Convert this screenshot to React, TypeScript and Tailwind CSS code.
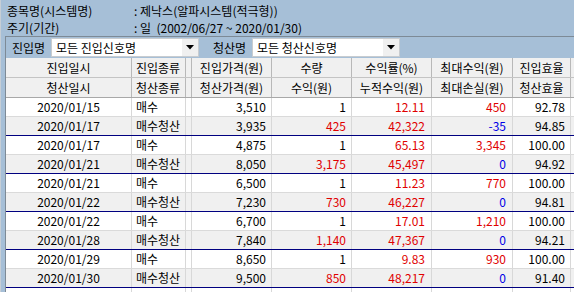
import React from 'react'

type Cell = { text: string; color?: 'red' | 'blue' }
type Row = Cell[]

const widths = ['w-[126px]', 'w-[54px]', 'w-[6px]', 'w-[80px]', 'w-[80px]', 'w-[80px]', 'w-[81px]', 'w-[58px]', 'w-[20px]']

// alignment per column for data rows
const align = [
  'justify-center',
  'justify-start pl-[4px]',
  'justify-start',
  'justify-end pr-[5px]',
  'justify-end pr-[5px]',
  'justify-end pr-[6px]',
  'justify-end pr-[6px]',
  'justify-end pr-[5px]',
  'justify-end',
]

const head1 = ['진입일시', '진입종류', '', '진입가격(원)', '수량', '수익률(%)', '최대수익(원)', '진입효율', '']
const head2 = ['청산일시', '청산종류', '', '청산가격(원)', '수익(원)', '누적수익(원)', '최대손실(원)', '청산효율', '']

const r = (t: string): Cell => ({ text: t, color: 'red' })
const b = (t: string): Cell => ({ text: t, color: 'blue' })
const k = (t: string): Cell => ({ text: t })

const rows: Row[] = [
  [k('2020/01/15'), k('매수'), k(''), k('3,510'), k('1'), r('12.11'), r('450'), k('92.78'), k('')],
  [k('2020/01/17'), k('매수청산'), k(''), k('3,935'), r('425'), r('42,322'), b('-35'), k('94.85'), k('')],
  [k('2020/01/17'), k('매수'), k(''), k('4,875'), k('1'), r('65.13'), r('3,345'), k('100.00'), k('')],
  [k('2020/01/21'), k('매수청산'), k(''), k('8,050'), r('3,175'), r('45,497'), b('0'), k('94.92'), k('')],
  [k('2020/01/21'), k('매수'), k(''), k('6,500'), k('1'), r('11.23'), r('770'), k('100.00'), k('')],
  [k('2020/01/22'), k('매수청산'), k(''), k('7,230'), r('730'), r('46,227'), b('0'), k('94.81'), k('')],
  [k('2020/01/22'), k('매수'), k(''), k('6,700'), k('1'), r('17.01'), r('1,210'), k('100.00'), k('')],
  [k('2020/01/28'), k('매수청산'), k(''), k('7,840'), r('1,140'), r('47,367'), b('0'), k('94.21'), k('')],
  [k('2020/01/29'), k('매수'), k(''), k('8,650'), k('1'), r('9.83'), r('930'), k('100.00'), k('')],
  [k('2020/01/30'), k('매수청산'), k(''), k('9,500'), r('850'), r('48,217'), b('0'), k('91.40'), k('')],
]

function Arrow() {
  return (
    <svg width="8" height="5" viewBox="0 0 8 5" aria-hidden="true">
      <polygon points="0,0 8,0 4,4.5" fill="#000" />
    </svg>
  )
}

function Combo({ label, value }: { label: string; value: string }) {
  return (
    <div className="flex h-full">
      <div className="flex w-[45px] items-center justify-center">{label}</div>
      <div className="flex w-[148px] items-center border border-[#c8ccd0] bg-white">
        <span className="flex-1 pl-[4px]">{value}</span>
        <span className="flex h-full w-[16px] items-center justify-center bg-[#f0f0f0]">
          <Arrow />
        </span>
      </div>
    </div>
  )
}

function HeaderRow({ cells, last }: { cells: string[]; last?: boolean }) {
  return (
    <div className={`flex h-[20px] border-b ${last ? 'border-[#a8a8a8]' : 'border-[#c4c4c4]'}`}>
      {cells.map((t, i) => (
        <div
          key={i}
          className={`${widths[i]} flex shrink-0 items-center overflow-hidden whitespace-nowrap border-r border-[#b8b8b8] bg-[#f0f0f0] ${
            i === 1 ? 'justify-start pl-[4px]' : 'justify-center'
          }`}
        >
          {t}
        </div>
      ))}
    </div>
  )
}

export default function App() {
  return (
    <div
      className="h-[292px] w-[574px] overflow-hidden border-l border-[#c6ced6] bg-[#a6bfd7] text-[12px] leading-none text-black"
      style={{ fontFamily: '"Noto Sans CJK KR", "Liberation Sans", sans-serif' }}
    >
      {/* info lines */}
      <div className="flex h-[36px] flex-col pl-[6px] pt-[2px]">
        <div className="flex h-[17px] items-center">
          <span className="w-[127px]">종목명(시스템명)</span>
          <span className="whitespace-pre">: 제낙스(알파시스템(적극형))</span>
        </div>
        <div className="flex h-[17px] items-center">
          <span className="w-[127px]">주기(기간)</span>
          <span className="whitespace-pre">: 일  (2002/06/27 ~ 2020/01/30)</span>
        </div>
      </div>

      {/* panel */}
      <div className="ml-[4px] border-l border-t border-[#7d8a96]">
        <div className="flex h-[21px] gap-[8px] py-[1px]">
          <Combo label="진입명" value="모든 진입신호명" />
          <Combo label="청산명" value="모든 청산신호명" />
        </div>

        <div className="bg-white">
          <HeaderRow cells={head1} />
          <HeaderRow cells={head2} last />
          {rows.map((row, ri) => (
            <div
              key={ri}
              className={`flex h-[19px] border-b ${
                ri % 2 === 1 ? 'border-[#000080] bg-[#f0f0f0]' : 'border-[#dadada] bg-white'
              }`}
            >
              {row.map((c, ci) => (
                <div
                  key={ci}
                  className={`${widths[ci]} ${align[ci]} flex shrink-0 items-center overflow-hidden whitespace-nowrap border-r border-[#d8d8d8] ${
                    c.color === 'red' ? 'text-[#e00000]' : c.color === 'blue' ? 'text-[#0000e6]' : 'text-black'
                  }`}
                >
                  {c.text}
                </div>
              ))}
            </div>
          ))}
          <div className="flex h-[19px] bg-white">
            {widths.map((w, i) => (
              <div key={i} className={`${w} shrink-0 border-r border-[#d8d8d8]`} />
            ))}
          </div>
        </div>
      </div>
    </div>
  )
}
